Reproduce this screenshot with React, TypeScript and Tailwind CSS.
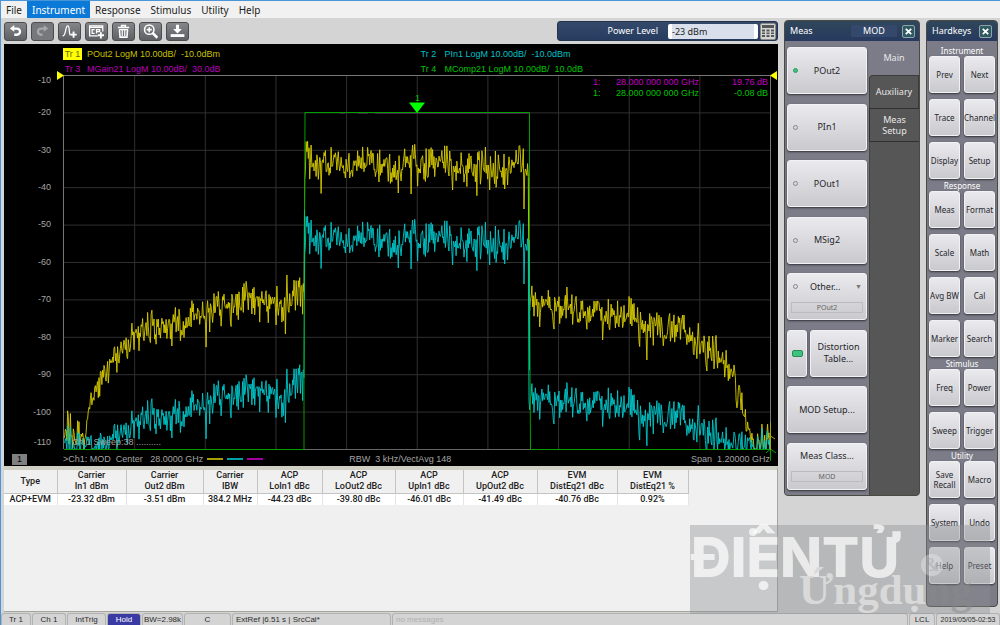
import type { ReactNode } from 'react';

type Pt = [number, number];

const SANS = "font-['Liberation_Sans',Arial,sans-serif]";

/* ---------- trace data ---------- */

function random(seed: number) {
  let s = seed;
  return () => {
    s = (s * 1664525 + 1013904223) % 4294967296;
    return s / 4294967296;
  };
}

function level(points: Pt[], x: number) {
  for (let i = 1; i < points.length; i++) {
    if (x <= points[i][0]) {
      const [x0, y0] = points[i - 1];
      const [x1, y1] = points[i];
      return y0 + ((y1 - y0) * (x - x0)) / (x1 - x0);
    }
  }
  return points[points.length - 1][1];
}

const outLeft: Pt[] = [[64, 442], [67, 430], [80, 431], [84, 440], [87, 425], [90, 405], [95, 383], [100, 383], [103, 373], [117, 361], [122, 350], [133, 336], [150, 328], [170, 327], [185, 327], [197, 317], [210, 318], [217, 308], [235, 310], [240, 304], [243, 297], [250, 300], [258, 306], [275, 305], [285, 308], [293, 296], [304, 292]];
const inLeft: Pt[] = [[64, 446], [80, 442], [110, 444], [120, 436], [130, 426], [150, 416], [163, 419], [180, 419], [197, 408], [210, 410], [217, 397], [235, 402], [240, 393], [250, 391], [258, 396], [272, 395], [283, 403], [293, 385], [304, 378]];
const band: Pt[] = [[305, 164], [308, 158], [313, 168], [319, 167], [328, 162], [340, 163], [350, 168], [362, 165], [372, 160], [378, 168], [388, 166], [397, 176], [404, 166], [410, 160], [420, 165], [440, 164], [455, 168], [480, 167], [500, 170], [510, 169], [519, 159], [524, 164], [529, 180]];
const outRight: Pt[] = [[530, 302], [545, 306], [553, 311], [575, 308], [590, 315], [615, 316], [633, 317], [645, 333], [651, 323], [665, 333], [683, 328], [693, 342], [710, 349], [723, 359], [732, 367], [738, 390], [744, 413], [749, 436], [758, 444], [771, 440]];
const inRight: Pt[] = [[530, 401], [540, 397], [553, 406], [577, 400], [590, 407], [605, 404], [633, 408], [643, 425], [651, 412], [667, 421], [680, 414], [690, 429], [700, 426], [707, 433], [722, 438], [735, 441], [745, 445], [771, 448]];

const spikes: Record<number, number> = {
  285: 334, 287: 275, 366: 193, 398: 193, 411: 194, 413: 145, 453: 190, 490: 190, 485: 147,
  519: 147, 524: 209, 549: 341, 567: 287, 603: 340, 647: 360, 707: 371, 719: 388, 734: 365,
};

function buildTrace(out: boolean) {
  const rnd = random(4242);
  const d: string[] = [];
  const left = out ? outLeft : inLeft;
  const right = out ? outRight : inRight;
  const shift = out ? 0 : 75;
  for (let i = 0; i <= 989; i++) {
    const x = 64 + i / 1.4;
    const r = rnd() + rnd() - 1;
    const dip = rnd();
    const depth = rnd();
    let n = r * 21 + (dip > 0.9 ? depth * 17 : -2);
    const inBand = x >= 304.5 && x < 529;
    let base: number;
    if (inBand) base = level(band, x) + shift;
    else base = level(x < 304.5 ? left : right, x);
    if (x > 86 && x < 120) n *= 0.85;
    let y = base + n;
    const key = Math.round(x);
    if (spikes[key] !== undefined && i % 2 === 0) {
      if (inBand) y = spikes[key] + shift;
      else y = out ? spikes[key] : base + (spikes[key] - level(x < 304 ? outLeft : outRight, x)) * 0.9;
    }
    d.push(x.toFixed(1) + ' ' + Math.min(449, y).toFixed(1));
  }
  return 'M' + d.join('L');
}

const yellowTrace = buildTrace(true);
const cyanTrace = buildTrace(false);

/* ---------- plot ---------- */

function Plot() {
  const cols = [1, 2, 3, 4, 5, 6, 7, 8, 9];
  const rows = [1, 2, 3, 4, 5, 6, 7, 8, 9];
  const labels: Pt[] = [[-10, 80], [-20, 112], [-30, 150], [-40, 187], [-50, 224], [-60, 262], [-70, 299], [-80, 337], [-90, 374], [-100, 412], [-110, 442]];
  return (
    <svg viewBox="4 75 774 377" className={`block w-full overflow-visible text-[9px] ${SANS}`} role="img" aria-label="Spectrum traces">
      <g stroke="#303030">
        {cols.map((c) => <path key={c} d={`M${64 + c * 70.65} 75V449`} />)}
        {rows.map((r) => <path key={r} d={`M64 ${75.5 + r * 37.4}H771`} />)}
      </g>
      <path d="M63.500 449V75.500H770.500V449" fill="none" stroke="#777" />
      <path d="M64 449.500H771" stroke="#666" />
      <g fill="#a4a4a4" textAnchor="end">
        {labels.map(([t, y]) => <text key={t} x="51" y={y + 3}>{t}</text>)}
      </g>
      <path d={yellowTrace} fill="none" stroke="#d8cc00" strokeWidth="0.9" strokeLinejoin="bevel" />
      <path d={cyanTrace} fill="none" stroke="#00c8cc" strokeWidth="0.9" strokeLinejoin="bevel" />
      <path d="M64 449.500H304V375L305 113L305 112.500H529.500V280L530.500 449.500H771" fill="none" stroke="#00a000" />
      <path d="M340 113.500H345M358 113.500H368M375 113.500H529" stroke="#4a1c4a" />
      <path d="M304.500 300V210M529.500 240V370" stroke="#00c860" />
      <path d="M409 102.500H425L417 113Z" fill="#00ff00" />
      <text x="415" y="101" fill="#00d000">1</text>
      <path d="M57 71V80L64 75.500Z" fill="#ffff00" />
      <path d="M777 71V80L770 75.500Z" fill="#ffff00" />
      <path d="M770.500 461V450M766 453L770.500 449L776 453" fill="none" stroke="#00a000" />
      <path d="M770.500 422V450M767 439L770.500 436L775 439" fill="none" stroke="#b0a400" />
      <g fill="#c000c0">
        <text x="593" y="85">1:</text>
        <text x="699" y="85" textAnchor="end">28.000 000 000 GHz</text>
        <text x="768" y="85" textAnchor="end">19.76 dB</text>
      </g>
      <g fill="#00c400">
        <text x="593" y="96">1:</text>
        <text x="699" y="96" textAnchor="end">28.000 000 000 GHz</text>
        <text x="768" y="96" textAnchor="end">-0.08 dB</text>
      </g>
      <text x="72" y="445" fill="#a0a0a0">Ch 1 Sweep:38 ..........</text>
    </svg>
  );
}

function ChartWindow() {
  return (
    <section className={`bg-black text-[9px] leading-3 whitespace-pre ${SANS}`}>
      <div className="grid grid-cols-2 gap-x-0 gap-y-[3px] pt-[4px] pl-[59px]">
        <div className="flex gap-[5px] text-[#c8c000]">
          <span className="w-[19px] bg-[#ffff00] text-center text-[#6b6800]">Tr 1</span>
          <span>POut2 LogM 10.00dB/  -10.0dBm</span>
        </div>
        <div className="flex gap-[5px] text-[#00c0c8]">
          <span className="w-[19px]">Tr 2</span>
          <span>PIn1 LogM 10.00dB/  -10.0dBm</span>
        </div>
        <div className="flex gap-[5px] text-[#b800b8]">
          <span className="w-[19px] text-center">Tr 3</span>
          <span>MGain21 LogM 10.00dB/  30.0dB</span>
        </div>
        <div className="flex gap-[5px] text-[#00c400]">
          <span className="w-[19px]">Tr 4</span>
          <span>MComp21 LogM 10.00dB/  10.0dB</span>
        </div>
      </div>
      <Plot />
      <div className="flex h-[14px] items-center pr-2 pl-2 text-[#a4a4a4]">
        <span className="flex h-[11px] w-[15px] items-center justify-center bg-[#808080] text-black">1</span>
        <span className="ml-9">&gt;Ch1: MOD  Center   28.0000 GHz</span>
        <span className="ml-1 flex gap-1">
          <i className="h-[2px] w-4 bg-[#a8a000]" />
          <i className="h-[2px] w-4 bg-[#00a0a8]" />
          <i className="h-[2px] w-4 bg-[#a000a0]" />
        </span>
        <span className="ml-[86px]">RBW  3 kHz/VectAvg 148</span>
        <span className="ml-auto">Span  1.20000 GHz</span>
      </div>
    </section>
  );
}

/* ---------- results table ---------- */

const results = [
  { head: ['Carrier', 'In1 dBm'], value: '-23.32 dBm', width: 'w-[69px]' },
  { head: ['Carrier', 'Out2 dBm'], value: '-3.51 dBm', width: 'w-[77px]' },
  { head: ['Carrier', 'IBW'], value: '384.2 MHz', width: 'w-[54px]' },
  { head: ['ACP', 'LoIn1 dBc'], value: '-44.23 dBc', width: 'w-[65px]' },
  { head: ['ACP', 'LoOut2 dBc'], value: '-39.80 dBc', width: 'w-[73px]' },
  { head: ['ACP', 'UpIn1 dBc'], value: '-46.01 dBc', width: 'w-[68px]' },
  { head: ['ACP', 'UpOut2 dBc'], value: '-41.49 dBc', width: 'w-[74px]' },
  { head: ['EVM', 'DistEq21 dBc'], value: '-40.76 dBc', width: 'w-[80px]' },
  { head: ['EVM', 'DistEq21 %'], value: '0.92%', width: 'w-[71px]' },
];

function ResultsTable() {
  return (
    <div className="flex-1 border-t-4 border-r border-b border-t-[#d0cfc4] border-r-[#a5a59d] border-b-[#a5a59d] bg-[#f0f0f0]">
      <table className="table-fixed border-collapse text-center font-['Roboto','Liberation_Sans',sans-serif] text-[9px] leading-[11px] font-medium text-[#202020]">
        <thead>
          <tr>
            <th scope="col" className="h-[23px] w-[53px] border-r border-b border-[#c4c4c4] p-0 font-medium">Type</th>
            {results.map((r) => (
              <th key={r.head.join()} scope="col" className={`border-r border-b border-[#c4c4c4] p-0 font-medium ${r.width}`}>
                {r.head[0]}<br />{r.head[1]}
              </th>
            ))}
          </tr>
        </thead>
        <tbody>
          <tr className="bg-white">
            <td className="border-r border-[#e4e4e4] p-0">ACP+EVM</td>
            {results.map((r) => <td key={r.head.join()} className="border-r border-[#e4e4e4] p-0">{r.value}</td>)}
          </tr>
        </tbody>
      </table>
    </div>
  );
}

/* ---------- toolbar ---------- */

const tools: { name: string; dim?: boolean; icon: ReactNode }[] = [
  { name: 'Undo', icon: <path d="M10 1.500L3 7L10 12.500V9H14C18.500 9 18.500 15 14 15H10V19H14C23.500 19 23.500 5.500 14 5.500H10Z" fill="currentColor" stroke="none" /> },
  { name: 'Redo', dim: true, icon: <path d="M14 1.500L21 7L14 12.500V9H10C5.500 9 5.500 15 10 15H12V19H10C0.500 19 0.500 5.500 10 5.500H14Z" fill="currentColor" stroke="none" /> },
  { name: 'Add trace', icon: <><path d="M1 19C7 19 5 3 9 3C13 3 10.500 13 13 18" strokeWidth="2" /><path d="M18.500 12V22M13.500 17H23.500" strokeWidth="3" /></> },
  { name: 'Add window', icon: <><path d="M22 12V3H1V19H14M1 5.500H22" strokeWidth="2" /><path d="M9 9H5V15H9M12 15V9H17V12H12" strokeWidth="2" /><path d="M19 13V23M14 18H24" strokeWidth="3" /></> },
  { name: 'Delete', icon: <><path d="M3 5.500H21M9 5V2.500H15V5M5.500 9L6.500 21H17.500L18.500 9" strokeWidth="2.500" /><path d="M10 9V19M14 9V19M5 9H19" strokeWidth="2" /></> },
  { name: 'Zoom', icon: <><circle cx="10" cy="9" r="7.500" strokeWidth="2.500" /><path d="M10 5V13M6 9H14" strokeWidth="2.500" /><path d="M15 14L23 22" strokeWidth="4" /></> },
  { name: 'Save', icon: <><path d="M9.500 1H14.500V8H19L12 15L5 8H9.500Z" fill="currentColor" stroke="none" /><path d="M1 18.500H23" strokeWidth="4.500" /></> },
];

function Toolbar() {
  return (
    <div className="flex h-[26px] items-center">
      <div className="flex gap-[4px]">
        {tools.map((t) => (
          <button
            key={t.name}
            type="button"
            aria-label={t.name}
            className={`flex h-[19px] w-[23px] items-center justify-center rounded-[3px] border border-[#4c4c50] bg-linear-to-b ${t.dim ? 'from-[#77787c] to-[#77787c] text-[#a8a8ac]' : 'from-[#85868a] to-[#5f6064] text-white'}`}
          >
            <svg viewBox="0 0 24 24" className="size-[15px]" fill="none" stroke="currentColor">{t.icon}</svg>
          </button>
        ))}
      </div>
      <div className="ml-auto flex h-5 w-[221px] items-center justify-end gap-[2px] rounded-[3px] border border-[#24344e] bg-linear-to-b from-[#34496a] to-[#263c60] pr-[1px]">
        <label htmlFor="power" className="mr-2 font-['Noto_Sans',sans-serif] text-[9px] text-white">Power Level</label>
        <input id="power" defaultValue="-23 dBm" className="h-[15px] w-[90px] rounded-[2px] border-x-4 border-white bg-[#d9e0ec] font-['Noto_Sans',sans-serif] text-[9px] text-[#222]" />
        <button type="button" aria-label="Keypad" className="flex h-[17px] w-4 items-center justify-center rounded-[2px] border border-[#8a8a8a] bg-[#d4d4d4]">
          <svg viewBox="0 0 12 12" className="size-3" fill="#555">
            <path d="M0 0H12V3H0ZM0 4.500H3V6.500H0ZM4.500 4.500H7.500V6.500H4.500ZM9 4.500H12V6.500H9ZM0 7.500H3V9H0ZM4.500 7.500H7.500V9H4.500ZM9 7.500H12V9H9ZM0 10H3V12H0ZM4.500 10H7.500V12H4.500ZM9 10H12V12H9Z" />
          </svg>
        </button>
      </div>
    </div>
  );
}

/* ---------- side panels ---------- */

function CloseButton() {
  return (
    <button type="button" aria-label="Close" className="flex h-[13px] w-[13px] items-center justify-center rounded-[2px] border border-[#8fa5a8] bg-[#2f5a62]">
      <svg viewBox="0 0 10 10" className="size-[9px]" stroke="#fff" strokeWidth="2"><path d="M2 2L8 8M8 2L2 8" /></svg>
    </button>
  );
}

const KEY = 'rounded-[3px] border border-[#f2f2f5] bg-linear-to-b from-[#eaeaee] to-[#c9c9ce] text-[#26262a] shadow-[0_1px_2px_#33333a]';
const SOFTKEY = `relative flex h-[47px] w-full flex-col items-center justify-center ${KEY}`;

function Led({ on }: { on?: boolean }) {
  return <i className={`absolute left-[5px] size-[5px] rounded-full border ${on ? 'border-[#2a9a60] bg-[#3cc47c]' : 'border-[#85858a]'}`} />;
}

function MeasPanel() {
  return (
    <aside className="w-[136px] self-start overflow-hidden rounded-[4px] border border-[#4a4a44] bg-[#565656] font-['Noto_Sans',sans-serif] text-[9px] leading-[12px]">
      <header className="flex h-5 items-center bg-linear-to-b from-[#30475a] to-[#27395f] pr-[4px] pl-[5px] text-[9px] text-white">
        <h2>Meas</h2>
        <span className="ml-auto w-[46px] bg-[#33486a] text-center">MOD</span>
        <span className="ml-[5px]"><CloseButton /></span>
      </header>
      <div className="flex h-[454px]">
        <div className="flex w-[84px] flex-col justify-between bg-[#7c7c88] px-[2px] pt-[6px] pb-[5px]">
          <button type="button" className={SOFTKEY}><span className="absolute left-0 flex h-full items-center"><Led on /></span>POut2</button>
          {['PIn1', 'POut1', 'MSig2'].map((k) => (
            <button key={k} type="button" className={SOFTKEY}><span className="absolute left-0 flex h-full items-center"><Led /></span>{k}</button>
          ))}
          <button type="button" className={`${SOFTKEY} gap-[9px]`}>
            <span className="flex w-full items-center pl-[5px]">
              <i className="size-[5px] rounded-full border border-[#85858a]" />
              <span className="ml-3">Other...</span>
              <span className="mr-1 ml-auto text-[7px] text-[#777]">▼</span>
            </span>
            <span className="w-[72px] border border-[#bcbcc0] text-[7px] leading-[9px] text-[#666]">POut2</span>
          </button>
          <div className="flex gap-[3px]">
            <button type="button" aria-label="Toggle distortion table" className={`flex h-[47px] w-[20px] items-center justify-center ${KEY}`}>
              <i className="h-[7px] w-[11px] rounded-[2px] border border-[#2b8a58] bg-[#3cc47c]" />
            </button>
            <button type="button" className={`h-[47px] flex-1 ${KEY}`}>Distortion<br />Table...</button>
          </div>
          <button type="button" className={SOFTKEY}>MOD Setup...</button>
          <button type="button" className={`${SOFTKEY} gap-[9px]`}>
            <span>Meas Class...</span>
            <span className="w-[72px] border border-[#bcbcc0] text-[7px] leading-[9px] text-[#666]">MOD</span>
          </button>
        </div>
        <nav className="flex flex-1 flex-col text-[#e8e8e8]">
          <button type="button" className="h-[34px] bg-[#7c7c88]">Main</button>
          <div className="bg-[#7c7c88]">
            <button type="button" className="h-[33px] w-full rounded-tl-[4px] border border-b-0 border-[#3c3c3a] bg-[#565656]">Auxiliary</button>
          </div>
          <button type="button" className="h-[34px] border-y border-l border-[#303030] leading-[11px]">Meas<br />Setup</button>
          <div className="flex-1 border-l border-[#45453f]" />
        </nav>
      </div>
    </aside>
  );
}

const hardkeys = [
  { title: 'Instrument', keys: ['Prev', 'Next', 'Trace', 'Channel', 'Display', 'Setup'] },
  { title: 'Response', keys: ['Meas', 'Format', 'Scale', 'Math', 'Avg BW', 'Cal', 'Marker', 'Search'] },
  { title: 'Stimulus', keys: ['Freq', 'Power', 'Sweep', 'Trigger'] },
  { title: 'Utility', keys: ['Save Recall', 'Macro', 'System', 'Undo', 'Help', 'Preset'] },
];

function HardkeysPanel() {
  return (
    <aside className="w-[72px] self-start overflow-hidden rounded-[4px] border border-[#4a4a44] bg-[#7c7c88] pb-[22px] font-['Noto_Sans',sans-serif] text-[8px] leading-[10px]">
      <header className="flex h-5 items-center justify-between bg-linear-to-b from-[#30475a] to-[#27395f] pr-[5px] pl-[5px] text-[9px] text-white">
        <h2>Hardkeys</h2>
        <CloseButton />
      </header>
      <div className="px-[2px] pt-[3px]">
        {hardkeys.map((g) => (
          <section key={g.title}>
            <h3 className="h-3 text-center leading-[14px] text-white">{g.title}</h3>
            <div className="grid grid-cols-2 gap-x-[4px] gap-y-[6px]">
              {g.keys.map((k) => <button key={k} type="button" className={`flex h-[37px] items-center justify-center ${KEY}`}>{k}</button>)}
            </div>
          </section>
        ))}
      </div>
    </aside>
  );
}

/* ---------- status bar ---------- */

const status = [
  { text: 'Tr 1', cls: 'w-[30px] text-center' },
  { text: 'Ch 1', cls: 'w-[34px] text-center' },
  { text: 'IntTrig', cls: 'w-[39px] text-center' },
  { text: 'Hold', cls: 'w-[34px] text-center bg-[#3a3aa4] text-white' },
  { text: 'BW=2.98k', cls: 'w-[41px] text-center' },
  { text: 'C', cls: 'w-[47px] text-center' },
  { text: 'ExtRef |6.51 s | SrcCal*', cls: 'w-[159px] pl-[3px]' },
  { text: 'no messages', cls: 'flex-1 pl-[3px] text-[#b0b0b0]' },
  { text: 'LCL', cls: 'w-[26px] text-center' },
  { text: '2019/05/05-02:53', cls: 'w-[64px] text-center text-[7px]' },
];

function StatusBar() {
  return (
    <footer className={`flex gap-px pt-px text-[8px] leading-3 whitespace-nowrap text-[#2c2c2c] ${SANS}`}>
      {status.map((s) => <div key={s.text} className={`h-3 rounded-t-[3px] border border-b-0 border-[#b2b2b2] ${s.cls}`}>{s.text}</div>)}
    </footer>
  );
}

function Watermark() {
  return (
    <div className="pointer-events-none absolute right-[10px] bottom-[11px] h-[89px] w-[300px] bg-[#8c8e90]/40 whitespace-nowrap">
      <span className="absolute top-[3px] left-[59px] size-2 rounded-full bg-white/70" />
      <span className="absolute top-0 left-[1px] font-['Inter',sans-serif] text-[55px] leading-[65px] font-extrabold text-white/70">ĐIỆNTỬ</span>
      <span className="absolute top-[29px] left-[231px] flex size-[22px] items-center justify-center rounded-full bg-white/30 font-['Liberation_Serif',serif] text-[18px] font-bold text-[#999]/40">&amp;</span>
      <span className="absolute top-[40px] left-[109px] font-['Liberation_Serif',serif] text-[43px] leading-[50px] font-bold text-[#d9d9d9]">Ứngdụ<span className="text-[#8a8a8a]/50">ng</span></span>
    </div>
  );
}

const menus = ['File', 'Instrument', 'Response', 'Stimulus', 'Utility', 'Help'];

export default function App() {
  return (
    <div className="relative flex min-h-screen flex-col border-t border-l border-[#4a94d8] bg-[#d4d4d4]">
      <nav className="flex h-[17px] bg-[#f1f1f1] font-['Noto_Sans',sans-serif] text-[10px] leading-[16px] text-[#1c1c1c]">
        {menus.map((m) => (
          <button key={m} type="button" className={m === 'Instrument' ? 'bg-[#0b79d8] px-[5px] text-white' : 'px-[5px]'}>{m}</button>
        ))}
      </nav>
      <main className="flex flex-1 gap-[6px] pr-[2px]">
        <div className="flex min-w-0 flex-1 flex-col pl-[3px]">
          <Toolbar />
          <ChartWindow />
          <ResultsTable />
        </div>
        <div className="flex gap-[6px] pt-[2px]">
          <MeasPanel />
          <HardkeysPanel />
        </div>
      </main>
      <StatusBar />
      <Watermark />
    </div>
  );
}
